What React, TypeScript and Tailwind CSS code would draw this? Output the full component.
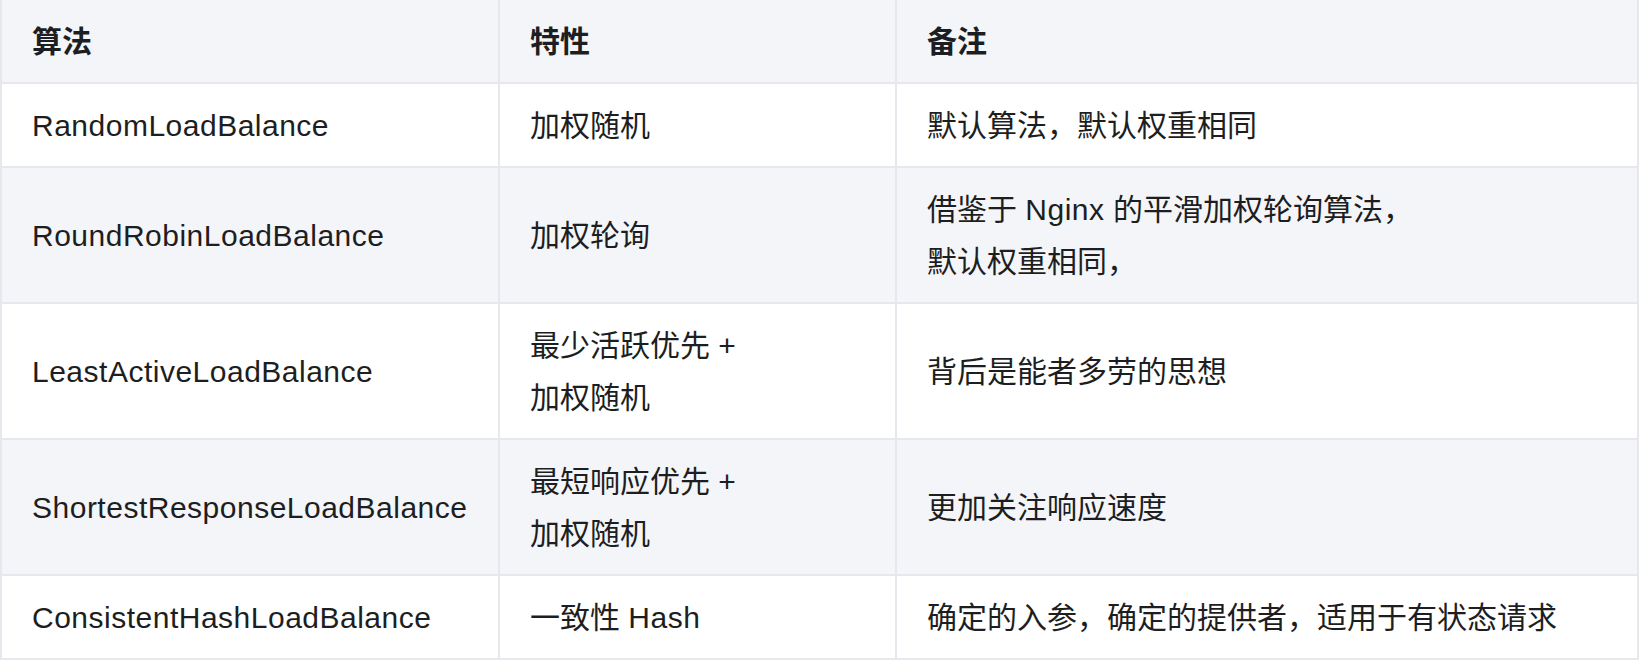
import React from "react";

type Row = {
  algo: string;
  feature: React.ReactNode;
  note: React.ReactNode;
};

const rows: Row[] = [
  {
    algo: "RandomLoadBalance",
    feature: "加权随机",
    note: "默认算法，默认权重相同",
  },
  {
    algo: "RoundRobinLoadBalance",
    feature: "加权轮询",
    note: (
      <>
        借鉴于 <span className="tracking-[0.5px]">Nginx</span> 的平滑加权轮询算法，
        <br />
        默认权重相同，
      </>
    ),
  },
  {
    algo: "LeastActiveLoadBalance",
    feature: (
      <>
        最少活跃优先 +
        <br />
        加权随机
      </>
    ),
    note: "背后是能者多劳的思想",
  },
  {
    algo: "ShortestResponseLoadBalance",
    feature: (
      <>
        最短响应优先 +
        <br />
        加权随机
      </>
    ),
    note: "更加关注响应速度",
  },
  {
    algo: "ConsistentHashLoadBalance",
    feature: (
      <>
        一致性 <span className="tracking-[0.5px]">Hash</span>
      </>
    ),
    note: "确定的入参，确定的提供者，适用于有状态请求",
  },
];

function Cell({
  children,
  bg,
  last,
  bold,
}: {
  children: React.ReactNode;
  bg: string;
  last?: boolean;
  bold?: boolean;
}) {
  return (
    <div
      className={
        "flex items-center px-[30px] pt-[16px] pb-[14px] border-b-2 border-[#e6e8ee] " +
        (last ? "" : "border-r-2 ") +
        (bold ? "font-bold " : "") +
        bg
      }
    >
      <div>{children}</div>
    </div>
  );
}

export default function App() {
  return (
    <div className="w-[1640px] h-[670px] bg-white overflow-hidden">
      <div
        className="w-[1639px] border-l-2 border-r-2 border-[#e6e8ee] grid grid-cols-[498px_397px_1fr] text-[30px] leading-[52px] text-[#1d1e21]"
        style={{ fontFamily: "'Liberation Sans', 'Noto Sans CJK SC', sans-serif" }}
      >
        <Cell bg="bg-[#f4f5f9]" bold>
          算法
        </Cell>
        <Cell bg="bg-[#f4f5f9]" bold>
          特性
        </Cell>
        <Cell bg="bg-[#f4f5f9]" bold last>
          备注
        </Cell>
        {rows.map((r, i) => {
          const bg = i % 2 === 1 ? "bg-[#f4f5f9]" : "bg-white";
          return (
            <React.Fragment key={r.algo}>
              <Cell bg={bg}>
                <span className="tracking-[0.5px]">{r.algo}</span>
              </Cell>
              <Cell bg={bg}>{r.feature}</Cell>
              <Cell bg={bg} last>
                {r.note}
              </Cell>
            </React.Fragment>
          );
        })}
      </div>
    </div>
  );
}
